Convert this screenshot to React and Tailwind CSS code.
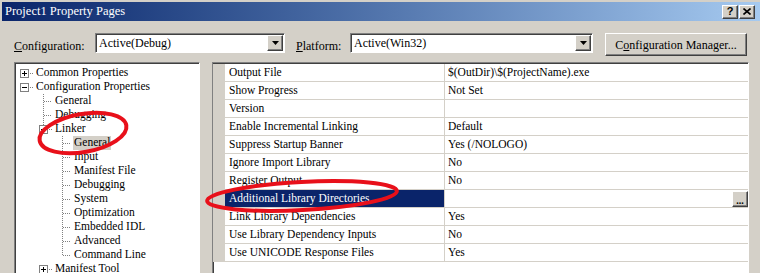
const sunken = 'border border-[#808080] border-r-white border-b-white shadow-[inset_1px_1px_0_#404040]';
const raised = 'border border-white border-r-[#404040] border-b-[#404040] shadow-[inset_-1px_-1px_0_#808080] bg-[#d4d0c8]';

const tree = [
  { label: 'Common Properties', level: 0, box: '+' },
  { label: 'Configuration Properties', level: 0, box: '-' },
  { label: 'General', level: 1, v: 'full' },
  { label: 'Debugging', level: 1, v: 'full' },
  { label: 'Linker', level: 1, box: '-', v: 'top' },
  { label: 'General', level: 2, v: 'full', selected: true },
  { label: 'Input', level: 2, v: 'full' },
  { label: 'Manifest File', level: 2, v: 'full' },
  { label: 'Debugging', level: 2, v: 'full' },
  { label: 'System', level: 2, v: 'full' },
  { label: 'Optimization', level: 2, v: 'full' },
  { label: 'Embedded IDL', level: 2, v: 'full' },
  { label: 'Advanced', level: 2, v: 'full' },
  { label: 'Command Line', level: 2, v: 'end' },
  { label: 'Manifest Tool', level: 1, box: '+' },
];

const props = [
  ['Output File', '$(OutDir)\\$(ProjectName).exe'],
  ['Show Progress', 'Not Set'],
  ['Version', ''],
  ['Enable Incremental Linking', 'Default'],
  ['Suppress Startup Banner', 'Yes (/NOLOGO)'],
  ['Ignore Import Library', 'No'],
  ['Register Output', 'No'],
  ['Additional Library Directories', '', true],
  ['Link Library Dependencies', 'Yes'],
  ['Use Library Dependency Inputs', 'No'],
  ['Use UNICODE Response Files', 'Yes'],
];

const TreeLines = ({ level, box, v }) => {
  const w = 20 + level * 19;
  const cx = 9 + level * 19;
  const x = cx + 0.5;
  const dot = { stroke: '#808080', strokeDasharray: '1 1', shapeRendering: 'crispEdges' };
  return (
    <svg width={w} height="14" className="shrink-0">
      {v === 'full' && <line x1={x} y1="0" x2={x} y2="14" {...dot} />}
      {v === 'end' && <line x1={x} y1="0" x2={x} y2="7" {...dot} />}
      {v === 'top' && <line x1={x} y1="0" x2={x} y2="3" {...dot} />}
      {box ? (
        <>
          <rect x={cx - 3.5} y="3.5" width="8" height="8" fill="white" stroke="#808080" shapeRendering="crispEdges" />
          <line x1={cx - 2} y1="7.5" x2={cx + 3} y2="7.5" stroke="black" shapeRendering="crispEdges" />
          {box === '+' && <line x1={x} y1="5" x2={x} y2="10" stroke="black" shapeRendering="crispEdges" />}
          <line x1={cx + 6} y1="7.5" x2={cx + 10} y2="7.5" {...dot} />
        </>
      ) : (
        <line x1={cx + 1} y1="7.5" x2={cx + 9} y2="7.5" {...dot} />
      )}
    </svg>
  );
};

const ComboBox = ({ value, width }) => (
  <div className={`${sunken} bg-white h-[20px] flex items-center ${width}`}>
    <span className="flex-1 pl-[3px] text-[12px] leading-none">{value}</span>
    <div className={`${raised} w-[16px] h-[16px] mr-[1px] flex items-center justify-center`}>
      <svg width="7" height="4"><path d="M0 0h7L3.5 4z" fill="black" /></svg>
    </div>
  </div>
);

export default function App() {
  return (
    <div className="relative w-[760px] h-[273px] overflow-hidden bg-[#d4d0c8] pt-[2px] pl-[2px] font-['Liberation_Serif','Times_New_Roman',serif] text-black">
      {/* title bar */}
      <div className="h-[19px] bg-gradient-to-r from-[#0a246a] to-[#a6caf0] flex items-center pl-[3px] pr-[5px]">
        <span className="flex-1 text-white text-[12.5px] leading-none">Project1 Property Pages</span>
        <div className="flex gap-[1px]">
          <div className={`${raised} w-[16px] h-[14px] flex items-center justify-center text-[11px] font-bold leading-none font-['Liberation_Sans',sans-serif]`}>?</div>
          <div className={`${raised} w-[16px] h-[14px] flex items-center justify-center`}>
            <svg width="8" height="7"><path d="M0.5 0.5L7.5 6.5M7.5 0.5L0.5 6.5" stroke="black" strokeWidth="1.6" /></svg>
          </div>
        </div>
      </div>

      {/* configuration row */}
      <div className="flex items-start mt-[12px] pl-[12px] text-[12px]">
        <span className="mt-[4px] w-[81px]"><u>C</u>onfiguration:</span>
        <ComboBox value="Active(Debug)" width="w-[190px]" />
        <span className="mt-[4px] ml-[11px] w-[54px]"><u>P</u>latform:</span>
        <ComboBox value="Active(Win32)" width="w-[243px]" />
        <div className={`${raised} ml-[12px] w-[142px] h-[23px] flex items-center justify-center`}>
          C<u>o</u>nfiguration Manager...
        </div>
      </div>

      {/* panels */}
      <div className="flex gap-[12px] mt-[6px] pl-[12px] text-[11.5px]">
        <div className={`${sunken} bg-white w-[186px] h-[230px] pt-[3px]`}>
          {tree.map((n, i) => (
            <div key={i} className="flex items-center h-[14px] whitespace-nowrap">
              <TreeLines level={n.level} box={n.box} v={n.v} />
              <span className={`leading-none px-[1px] py-[1px] ${n.selected ? 'bg-[#d4d0c8]' : ''}`}>{n.label}</span>
            </div>
          ))}
        </div>

        <div className={`${sunken} bg-white w-[537px] h-[230px] pt-[1px]`}>
          {props.map(([name, value, sel], i) => (
            <div key={i} className="flex h-[18px]">
              <div className="w-[12px] bg-[#d4d0c8]" />
              <div className={`w-[220px] border-b border-r border-[#d4d0c8] flex items-center pl-[4px] ${sel ? 'bg-[#0a246a] text-white' : ''}`}>{name}</div>
              <div className="flex-1 border-b border-[#d4d0c8] flex items-center pl-[3px]">
                <span className="flex-1">{value}</span>
                {sel && (
                  <div className={`${raised} w-[16px] h-[16px] flex items-end justify-center text-[10px] leading-[10px] font-bold`}>...</div>
                )}
              </div>
            </div>
          ))}
        </div>
      </div>

      {/* red annotation circles */}
      <svg className="absolute inset-0 pointer-events-none" width="760" height="273">
        <ellipse cx="83" cy="133" rx="44" ry="19" transform="rotate(-10 83 133)" fill="none" stroke="#e8101a" strokeWidth="4" />
        <ellipse cx="302" cy="196" rx="95" ry="14" transform="rotate(-3 302 196)" fill="none" stroke="#e8101a" strokeWidth="4" />
      </svg>
    </div>
  );
}
